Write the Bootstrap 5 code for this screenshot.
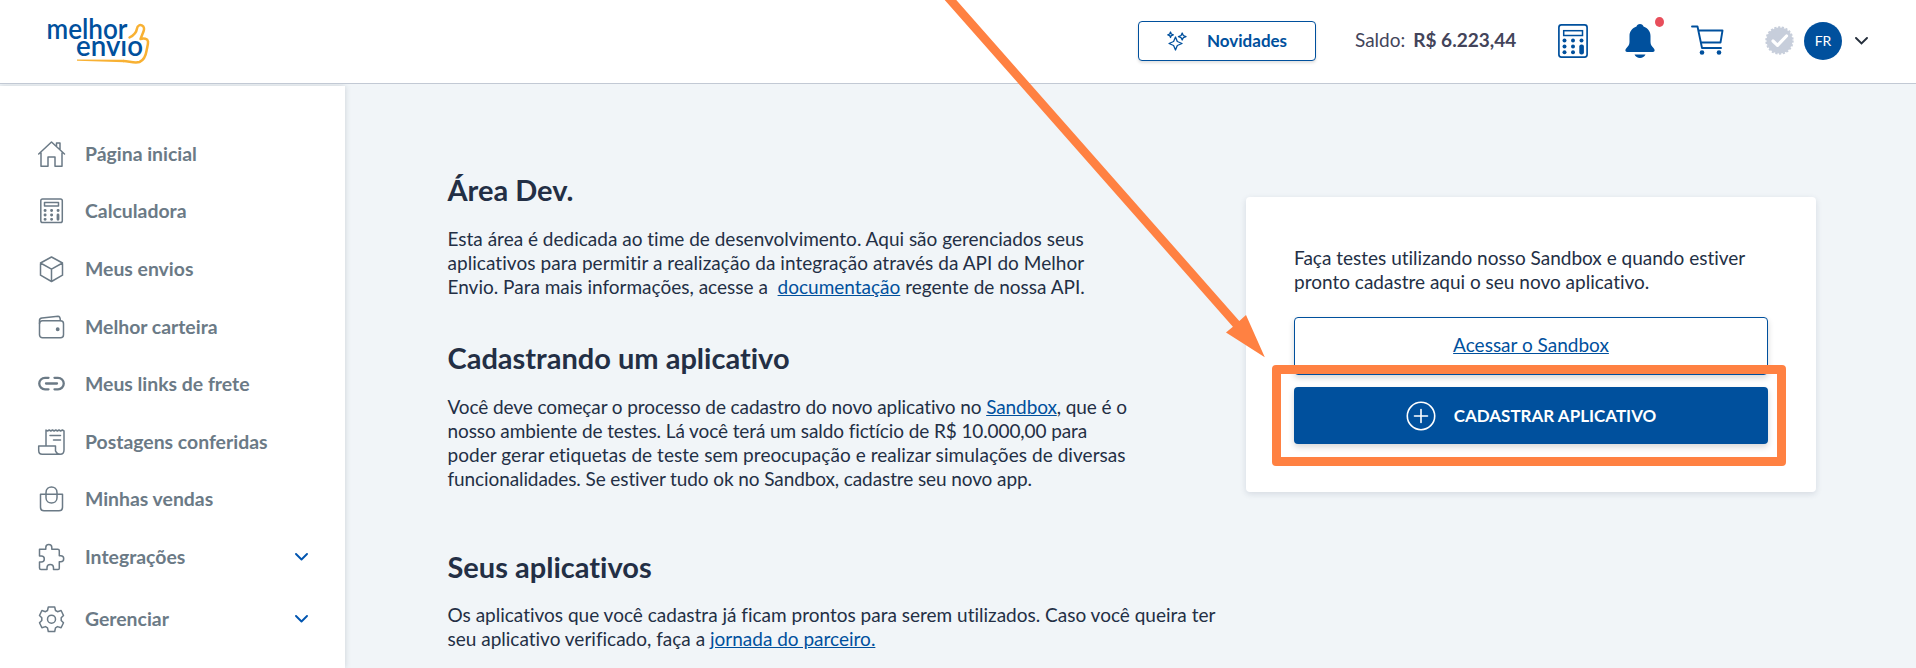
<!DOCTYPE html>
<html lang="pt-BR">
<head>
<meta charset="utf-8">
<meta name="viewport" content="width=device-width, initial-scale=1">
<title>Melhor Envio - Área Dev.</title>
<link href="https://cdn.jsdelivr.net/npm/bootstrap@5.3.0/dist/css/bootstrap.min.css" rel="stylesheet">
<style>
  :root { --me-blue: #00509d; --me-gray: #6b7a86; --me-ink: #232f45; --me-orange: #ff8142; }
  body { font-family: Lato, "Liberation Sans", sans-serif; font-variant-ligatures: no-common-ligatures; background: #f1f5f8; color: var(--me-ink); height: 668px; overflow: hidden; }
  a { color: var(--me-blue); }
  svg { display: block; flex: none; }
  .topbar { height: 84px; background: #fff; border-bottom: 1px solid #c2c9d4; padding: 0 48px 18px 46px; }
  .logo { overflow: visible; }
  .news-btn { width: 178px; height: 40px; border: 1px solid var(--me-blue); border-radius: 4px; color: var(--me-blue); font-weight: 700; font-size: 17px; background: #fff; box-shadow: 0 2px 3px rgba(0,0,0,.12); padding: 0 0 0 28px; margin-right: 39px; }
  .balance { width: 203px; font-size: 19px; color: #43445a; white-space: nowrap; }
  .balance b { margin-left: 8px; }
  .dot { width: 9px; height: 10px; background: #e84e5b; right: -9px; top: -7px; border-radius: 50%; }
  .avatar { width: 38px; height: 38px; background: var(--me-blue); color: #fff; font-size: 14px; margin: 0 13px 0 10px; }
  .side { width: 345px; background: #fff; margin-top: 2px; padding: 39px 0 0; box-shadow: 0 0 6px rgba(50,70,90,.2); clip-path: inset(-2px -12px 0 0); }
  .side .nav-link { height: 57.6px; padding: 0 37px 0 36px; gap: 19px; color: var(--me-gray); font-weight: 700; font-size: 19.4px; line-height: 28px; }
  .line { fill: none; stroke: currentColor; stroke-width: 1.5; stroke-linecap: round; stroke-linejoin: round; }
  .copy { margin-left: 102.500px; width: 798.500px; font-size: 19px; line-height: 24px; white-space: nowrap; padding-top: 84px; }
  .copy h2 { font-size: 29px; line-height: 44px; font-weight: 700; margin: 0 0 15px; }
  .looser { letter-spacing: .055px; }
  .tighter { letter-spacing: -.1px; }
  .dev-card { width: 570px; height: 295px; margin-top: 113px; padding: 49px 48px 48px; background: #fff; border: 0; border-radius: 4px; box-shadow: 0 2px 6px rgba(40,60,90,.14); font-size: 19px; line-height: 24px; color: var(--me-ink); }
  .wide-btn { height: 57px; border-radius: 4px; box-shadow: 0 3px 6px rgba(0,0,0,.16); }
  .sandbox { height: 58px; border: 1px solid var(--me-blue); text-decoration: underline; padding-bottom: 2px; }
  .register { background: var(--me-blue); color: #fff; font-weight: 700; font-size: 17px; margin-top: 12px; gap: 18px; }
  .frame { left: 26px; top: 168px; width: 514px; height: 101px; border: 9px solid var(--me-orange); border-radius: 4px; }
  .arrow { left: 0; top: 0; pointer-events: none; z-index: 5; }
</style>
</head>
<body>
<header class="topbar d-flex align-items-center">
  <svg class="logo me-auto mt-3" width="106" height="52" viewBox="46 15 106 52" aria-label="melhor envio">
    <g fill="#00509d" font-family="Lato, sans-serif" font-weight="600" font-size="28">
      <text x="46.500" y="39" textLength="81" lengthAdjust="spacingAndGlyphs">melhor</text>
      <text x="76" y="56" textLength="67" lengthAdjust="spacingAndGlyphs">envıo</text>
    </g>
    <path fill="none" stroke="#f8b133" stroke-width="2.500" stroke-linecap="round" stroke-linejoin="round" d="M129.500 37.500c5-2.500 7-5.500 7.500-9 .5-3 3-4 5-3 2.500 1 2.300 4 1.500 6l-3 7.500c3.500-.8 7-.5 7.500 2.500.3 3-1 6-1.500 9.500-.8 5-3.500 9.500-7 11-5 1.500-10-.7-16-1"/>
    <path fill="#f8b133" d="M77 59.500 124 59.800v2.500L77 60.800Z"/>
  </svg>
  <button class="news-btn d-flex align-items-center mt-3">
    <svg width="20" height="20" viewBox="0 0 20 20" class="line" style="stroke-width:1.300"><path d="M8.500 6 10.300 10.500 15 12.500 10.300 14.500 8.500 19 6.600 14.500 2 12.500 6.600 10.500ZM3.500 1 4.300 3 6.300 3.800 4.300 4.600 3.500 6.500 2.700 4.600.8 3.800 2.700 3ZM15.200 2 16.300 4.500 19 5.600 16.300 6.700 15.200 9 14.100 6.700 11.500 5.600 14.100 4.500Z"/></svg>
    <span class="ms-3 ps-1">Novidades</span>
  </button>
  <div class="balance mt-3">Saldo:<b>R$ 6.223,44</b></div>
  <svg class="mt-3" width="30" height="34" viewBox="0 0 30 34" fill="#00509d"><rect x=".9" y=".9" width="28.200" height="32.200" rx="2.500" fill="none" stroke="#00509d" stroke-width="1.700"/><rect x="5.700" y="6.700" width="18.800" height="4.800" fill="none" stroke="#00509d" stroke-width="1.500"/><g><circle cx="6.500" cy="16.500" r="2"/><circle cx="15" cy="16.500" r="2"/><circle cx="23.500" cy="16.500" r="2"/><circle cx="6.500" cy="22.500" r="2"/><circle cx="15" cy="22.500" r="2"/><circle cx="6.500" cy="28.300" r="2"/><circle cx="15" cy="28.300" r="2"/><rect x="21.300" y="20.500" width="4.600" height="10" rx="2"/></g></svg>
  <div class="position-relative mt-3" style="margin:0 36px 0 37px">
    <svg width="30" height="34" viewBox="0 0 30 34" fill="#00509d"><path d="M15 0c-2 0-3 1-3.500 2.500C7 4 4.500 7.500 4.500 12v6c0 3-1.500 4.500-3 6C-.5 26 .5 28 2 28h26c1.500 0 2.500-2 .5-4-1.500-1.500-3-3-3-6v-6c0-4.500-2.500-8-7-9.500C18 1 17 0 15 0ZM9.500 30.500h11c-1 2.300-3 3.500-5.500 3.500s-4.500-1.200-5.500-3.500Z"/></svg>
    <span class="dot position-absolute"></span>
  </div>
  <svg class="mt-3" width="33" height="31" viewBox="0 0 33 31" fill="none" stroke="#00509d" stroke-width="1.900" stroke-linejoin="round" stroke-linecap="round"><path d="M1 1.500h5.500L11 23h19M8 5.500h23.500L29.500 17.500H10.200"/><circle cx="11" cy="27.500" r="2.300" fill="#00509d" stroke="none"/><circle cx="28" cy="27.500" r="2.300" fill="#00509d" stroke="none"/></svg>
  <svg class="mt-3" style="margin-left:41px" width="29" height="29" viewBox="0 0 29 29"><circle cx="14.500" cy="14.500" r="13" fill="#c7cedb"/><circle cx="14.500" cy="14.500" r="13.300" fill="none" stroke="#c7cedb" stroke-width="1.800" stroke-dasharray="2.200 1.600"/><path d="m8 15 4.500 4.300L21.500 10" fill="none" stroke="#fff" stroke-width="3.200" stroke-linecap="round" stroke-linejoin="round"/></svg>
  <div class="avatar rounded-circle d-flex align-items-center justify-content-center mt-3">FR</div>
  <svg class="mt-3" width="13" height="8" viewBox="0 0 13 8" fill="none" stroke="#252f3c" stroke-width="1.900" stroke-linecap="round"><path d="m1 1 5.500 5.500L12 1"/></svg>
</header>

<div class="d-flex" style="height:584px">
  <nav class="side nav flex-column flex-nowrap flex-shrink-0">
    <a class="nav-link d-flex align-items-center" href="#"><svg width="30" height="30" viewBox="0 0 30 30" class="line"><path d="M2.700 15 15.500 3l13 12M5 14v13.200h7V18h7v9.200h7V14M20.500 7V4h3.500v6"/></svg>Página inicial</a>
    <a class="nav-link d-flex align-items-center" href="#"><svg width="30" height="30" viewBox="0 0 30 30" class="line"><rect x="4.800" y="3" width="21.500" height="23.500" rx="1.800"/><path d="M8.500 6.500h14v3.500h-14z"/><path stroke-width="2.800" d="M9 14.500h.2M15.500 14.500h.2M22 14.500h.2M9 19h.2M15.500 19h.2M9 23.300h.2M15.500 23.300h.2M22 19v4.300"/></svg>Calculadora</a>
    <a class="nav-link d-flex align-items-center" href="#"><svg width="30" height="30" viewBox="0 0 30 30" class="line"><path d="M15.500 3 26.500 9v12.200l-11 6.300-11-6.300V9ZM4.500 9l11 6.200 11-6.200M15.500 15.200v12.300"/></svg>Meus envios</a>
    <a class="nav-link d-flex align-items-center" href="#"><svg width="30" height="30" viewBox="0 0 30 30" class="line"><rect x="3.500" y="8.800" width="24" height="17" rx="3"/><path d="M3.500 11.500V8.300c0-1.500 1-2 2.500-2.200L22 4.300c1.800 0 2.300 1.500 2.300 4.300"/><circle cx="21.700" cy="17.300" r="1.200" fill="currentColor"/></svg>Melhor carteira</a>
    <a class="nav-link d-flex align-items-center" href="#"><svg width="30" height="30" viewBox="0 0 30 30" class="line" style="stroke-width:2.300"><path d="M12.500 8.800H9a5.700 5.700 0 0 0 0 11.500h3.500M18.500 8.800H22a5.700 5.700 0 0 1 0 11.500h-3.500M10 14.500h11"/></svg>Meus links de frete</a>
    <a class="nav-link d-flex align-items-center" href="#"><svg width="30" height="30" viewBox="0 0 30 30" class="line"><path d="M10 18.500V3l1.500 1L13.200 3l1.600 1 1.700-1 1.600 1 1.700-1 1.600 1L23 3l1.600 1L26.400 3 28 4v19c0 3-1.500 4.300-3.800 4.300S20.500 26 19.500 24v-5H2.700v4.500c0 2.500 1.400 3.800 3.500 3.800h18M14 8.500h10.500M17.500 13h7"/></svg>Postagens conferidas</a>
    <a class="nav-link d-flex align-items-center" href="#"><svg width="30" height="30" viewBox="0 0 30 30" class="line"><path d="M4.500 10.300h22v13c0 2.300-1.200 3.500-3.500 3.500H8c-2.300 0-3.500-1.200-3.500-3.500ZM10 13.500V8.700c0-7.700 11-7.700 11 0v5c0 7-11 7-11 0"/></svg>Minhas vendas</a>
    <a class="nav-link d-flex align-items-center" href="#"><svg width="30" height="30" viewBox="0 0 30 30" class="line"><path d="M3.500 7.300h6.300V5.500c0-4 6-4 6 0v1.800h6c1 0 1.500.5 1.500 1.500v5h1.400c4 0 4 6 0 6h-1.400v6.400c0 .8-.5 1.300-1.300 1.300h-4.500v-1.800c0-4.200-6.500-4.200-6.500 0v1.800H5c-1 0-1.500-.5-1.500-1.500v-6h1.800c4 0 4-6 0-6H3.500Z"/></svg>Integrações<svg class="ms-auto line" width="13" height="8" viewBox="0 0 13 8" style="color:#0055b0;stroke-width:1.900"><path d="m1 1 5.500 5.500L12 1"/></svg></a>
    <a class="nav-link d-flex align-items-center mt-1" href="#"><svg width="30" height="30" viewBox="0 0 30 30" class="line"><path d="M12.300 3h6.400l.8 3.500 2 1.200 3.600-1.200 2.400 5-2.300 2.300v2.700l2.300 2.300-2.400 5-3.600-1.200-2 1.200-.8 3.700h-6.400l-.8-3.700-2-1.200-3.600 1.200-2.400-5 2.300-2.300v-2.700L3.500 11.500l2.400-5 3.600 1.200 2-1.200Z"/><circle cx="15.500" cy="15.200" r="4"/></svg>Gerenciar<svg class="ms-auto line" width="13" height="8" viewBox="0 0 13 8" style="color:#0055b0;stroke-width:1.900"><path d="m1 1 5.500 5.500L12 1"/></svg></a>
  </nav>
  <main class="d-flex flex-grow-1">
    <section class="copy flex-shrink-0">
      <h2>Área Dev.</h2>
      <p style="margin-bottom:37px">Esta área é dedicada ao time de desenvolvimento. Aqui são gerenciados seus<br><span class="looser">aplicativos para permitir a realização da integração através da API do Melhor</span><br>Envio. Para mais informações, acesse a &nbsp;<a href="#">documentação</a> regente de nossa API.</p>
      <h2>Cadastrando um aplicativo</h2>
      <p style="margin-bottom:54px"><span class="tighter">Você deve começar o processo de cadastro do novo aplicativo no <a href="#">Sandbox</a>, que é o<br>nosso ambiente de testes. Lá você terá um saldo fictício de R$ 10.000,00 para</span><br><span class="looser">poder gerar etiquetas de teste sem preocupação e realizar simulações de diversas</span><br><span class="tighter">funcionalidades. Se estiver tudo ok no Sandbox, cadastre seu novo app.</span></p>
      <h2 style="margin-bottom:14px">Seus aplicativos</h2>
      <p class="mb-0">Os aplicativos que você cadastra já ficam prontos para serem utilizados. Caso você queira ter<br>seu aplicativo verificado, faça a <a href="#">jornada do parceiro.</a></p>
    </section>
    <aside class="dev-card card position-relative flex-shrink-0">
      <p class="text-nowrap" style="margin-bottom:23px">Faça testes utilizando nosso Sandbox e quando estiver<br>pronto cadastre aqui o seu novo aplicativo.</p>
      <a class="wide-btn sandbox d-flex align-items-center justify-content-center" href="#">Acessar o Sandbox</a>
      <a class="wide-btn register d-flex align-items-center justify-content-center text-decoration-none" href="#"><svg width="30" height="30" viewBox="0 0 30 30" fill="none" stroke="#fff" stroke-width="1.600" stroke-linecap="round"><circle cx="15" cy="15" r="13.700"/><path d="M15 8.500v13M8.500 15h13"/></svg>CADASTRAR APLICATIVO</a>
      <div class="frame position-absolute"></div>
    </aside>
  </main>
</div>
<svg class="arrow position-absolute" width="1916" height="668" viewBox="0 0 1916 668"><path fill="#ff8142" d="M944.700 0h11.600l283 320.900 6.700-5.900 18.800 42.300L1226 332.500l6.900-5.800Z"/></svg>
<script src="https://cdn.jsdelivr.net/npm/bootstrap@5.3.0/dist/js/bootstrap.bundle.min.js"></script>
</body>
</html>
